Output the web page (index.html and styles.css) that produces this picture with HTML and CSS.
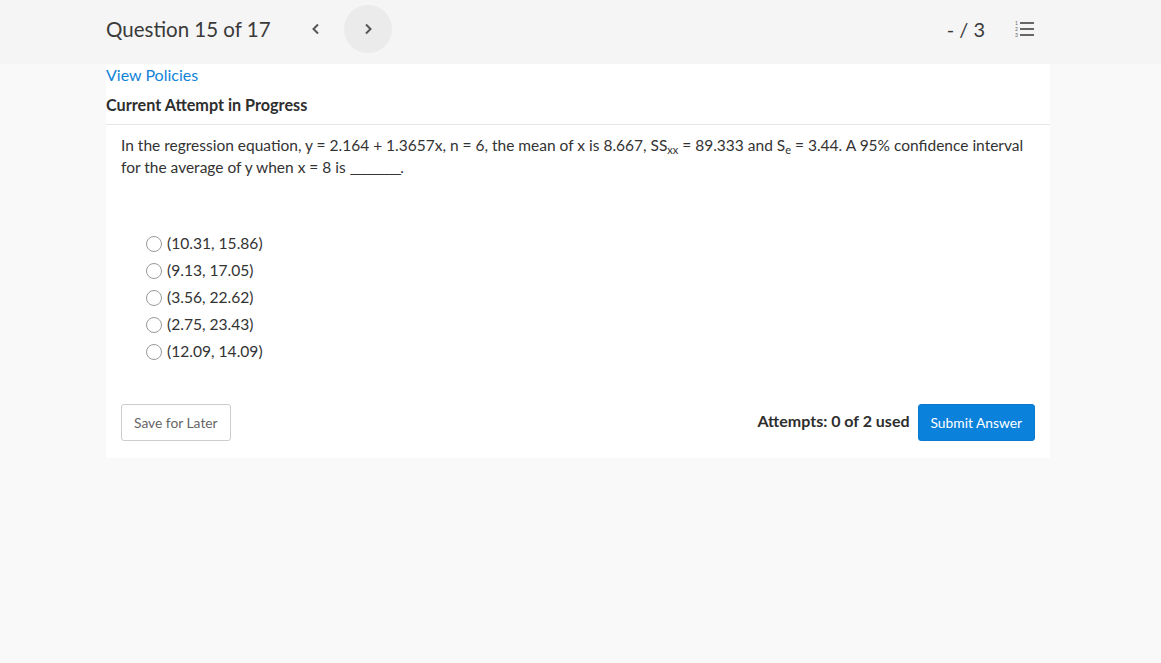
FILE: index.html
```html
<!DOCTYPE html>
<html lang="en">
	<head>
		<meta charset="UTF-8" />
		<title>Question 15 of 17</title>
		<link rel="stylesheet" href="styles.css">
	</head>
	<body>
		<div class="topbar">
			<div class="topbar-left">
				<span class="question-title">Question 15 of 17</span>
				<button class="nav-btn prev" aria-label="Previous">
					<svg width="10" height="12" viewBox="0 0 10 12"><path d="M7 1.5 L2.5 6 L7 10.5" fill="none" stroke="#555" stroke-width="2"/></svg>
				</button>
				<button class="nav-btn next" aria-label="Next">
					<svg width="10" height="12" viewBox="0 0 10 12"><path d="M3 1.5 L7.5 6 L3 10.5" fill="none" stroke="#555" stroke-width="2"/></svg>
				</button>
			</div>
			<div class="topbar-right">
				<span class="score">- / 3</span>
				<svg class="list-icon" width="20" height="18" viewBox="0 0 20 18">
					<text x="0" y="5" font-size="5" font-family="Lato, sans-serif" fill="#666">1</text>
					<text x="0" y="11" font-size="5" font-family="Lato, sans-serif" fill="#666">2</text>
					<text x="0" y="17" font-size="5" font-family="Lato, sans-serif" fill="#666">3</text>
					<rect x="5" y="2" width="14" height="2" fill="#666"/>
					<rect x="5" y="8" width="14" height="2" fill="#666"/>
					<rect x="5" y="14" width="14" height="2" fill="#666"/>
				</svg>
			</div>
		</div>

		<div class="card">
			<div class="card-head">
				<a href="#" class="policies">View Policies</a>
				<div class="attempt-status">Current Attempt in Progress</div>
			</div>
			<div class="question">
				<p class="question-text">In the regression equation, y = 2.164 + 1.3657x, n = 6, the mean of x is 8.667, SS<sub>xx</sub> = 89.333 and S<sub>e</sub> = 3.44. A 95% confidence interval for the average of y when x = 8 is <span class="blank">_________</span>.</p>
				<ul class="options">
					<li><label><span class="radio"></span>(10.31, 15.86)</label></li>
					<li><label><span class="radio"></span>(9.13, 17.05)</label></li>
					<li><label><span class="radio"></span>(3.56, 22.62)</label></li>
					<li><label><span class="radio"></span>(2.75, 23.43)</label></li>
					<li><label><span class="radio"></span>(12.09, 14.09)</label></li>
				</ul>
			</div>
			<div class="card-foot">
				<button class="btn btn-save">Save for Later</button>
				<div class="submit-group">
					<span class="attempts">Attempts: 0 of 2 used</span>
					<button class="btn btn-submit">Submit Answer</button>
				</div>
			</div>
		</div>
	</body>
</html>
```

FILE: styles.css
```css
body {
	font-family: Lato, "Open Sans", sans-serif;
	background-color: #f9f9f9;
	color: #333;
	margin: 0;
}
.topbar {
	background-color: #f5f5f5;
	height: 64px;
	display: flex;
	align-items: center;
	justify-content: space-between;
	padding: 0 106px 6px;
	box-sizing: border-box;
}
.topbar-left {
	display: flex;
	align-items: center;
}
.question-title {
	font-size: 20.5px;
	color: #3a3a3a;
	margin-right: 21px;
}
.nav-btn {
	width: 48px;
	height: 48px;
	border-radius: 50%;
	border: none;
	background: transparent;
	display: flex;
	align-items: center;
	justify-content: center;
	padding: 0;
}
.nav-btn.next {
	background-color: #ebebeb;
	margin-left: 4px;
}
.topbar-right {
	display: flex;
	align-items: center;
	margin-right: 20px;
}
.score {
	font-size: 20px;
	color: #3a3a3a;
	margin-right: 30px;
}
.card {
	background-color: #fff;
	width: 944px;
	margin-left: 106px;
	padding-bottom: 17px;
}
.card-head {
	padding-top: 1px;
	border-bottom: 1px solid #e6e6e6;
}
.policies {
	display: block;
	color: #1183d8;
	text-decoration: none;
	font-size: 16px;
	line-height: 20px;
}
.attempt-status {
	font-weight: bold;
	font-size: 16.2px;
	line-height: 20px;
	margin-top: 10px;
	padding-bottom: 9px;
	color: #2e2e2e;
}
.question {
	padding: 0 15px;
}
.question-text {
	font-size: 15.5px;
	line-height: 22px;
	margin: 9px 0 0;
	color: #333;
}
sub {
	font-size: 11px;
	line-height: 0;
	vertical-align: -3px;
}
.blank {
	letter-spacing: -1.5px;
}
.options {
	list-style-type: none;
	margin: 52px 0 0;
	padding-left: 25px;
}
.options li {
	font-size: 15.6px;
	line-height: 27px;
}
.options label {
	display: flex;
	align-items: center;
}
.radio {
	width: 16px;
	height: 16px;
	border: 1px solid #999;
	border-radius: 50%;
	margin-right: 5px;
	box-sizing: border-box;
}
.card-foot {
	display: flex;
	justify-content: space-between;
	align-items: center;
	padding: 0 15px;
	margin-top: 39px;
}
.btn {
	font-family: Lato, sans-serif;
	font-size: 13.8px;
	height: 37px;
	padding: 0 12px;
	border-radius: 3px;
}
.btn-save {
	background-color: #fff;
	border: 1px solid #ccc;
	color: #666;
}
.submit-group {
	display: flex;
	align-items: center;
}
.attempts {
	font-weight: bold;
	font-size: 16px;
	margin-right: 8px;
	margin-top: -4px;
	color: #2e2e2e;
}
.btn-submit {
	background-color: #0a82dc;
	border: 1px solid #0a7ad0;
	color: #fff;
}
```
